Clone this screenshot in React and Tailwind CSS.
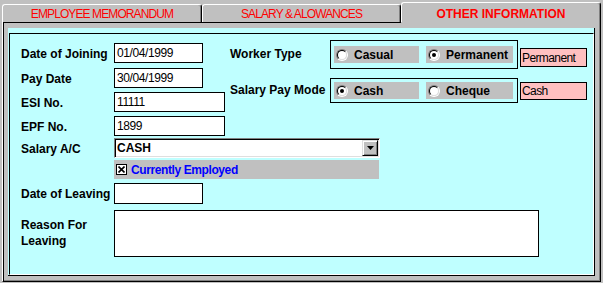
function Radio({ label, checked, width }) {
  return (
    <div className={`flex h-[17px] items-center bg-[#c0c0c0] pl-[2px] ${width}`}>
      <div className="flex h-[12px] w-[12px] items-center justify-center rounded-full border border-t-[#808080] border-l-[#808080] border-b-white border-r-white">
        <div className="flex h-[10px] w-[10px] items-center justify-center rounded-full border border-t-black border-l-black border-b-[#dfdfdf] border-r-[#dfdfdf] bg-white">
          {checked && <div className="h-[4px] w-[4px] rounded-full bg-black" />}
        </div>
      </div>
      <span className="ml-[6px] text-[12px] font-bold leading-none text-black">{label}</span>
    </div>
  );
}

function Field({ label, value, width, className = '' }) {
  return (
    <div className={`flex h-[20px] items-center ${className}`}>
      <span className="w-[93px] whitespace-nowrap pt-px text-[12px] font-bold">{label}</span>
      <div className={`flex h-[20px] items-center border border-black bg-white pl-[2px] text-[12px] tracking-[-0.4px] ${width}`}>
        {value}
      </div>
    </div>
  );
}

function Tab({ label, active, width }) {
  if (active) {
    return (
      <div
        className={`flex h-[20px] items-center justify-center rounded-t-[3px] border-t border-l border-r border-t-white border-l-white border-r-black pt-[3px] text-[12px] font-bold text-[#ff0000] shadow-[inset_-1px_0_0_#808080] ${width}`}
      >
        {label}
      </div>
    );
  }
  return (
    <div
      className={`flex h-[18px] items-center justify-center rounded-t-[3px] border-t border-l border-r border-t-white border-l-white border-r-black pt-px text-[12px] tracking-[-0.9px] text-[#ff0000] shadow-[inset_-1px_0_0_#808080] ${width}`}
    >
      {label}
    </div>
  );
}

export default function App() {
  return (
    <div className="flex h-[283px] w-[603px] flex-col overflow-hidden bg-[#c0c0c0] font-['Liberation_Sans',Arial,sans-serif] text-black">
      <div className="flex h-[22px] items-end pl-[2px]">
        <Tab label="EMPLOYEE MEMORANDUM" width="w-[200px]" />
        <Tab label="SALARY & ALOWANCES" width="w-[199px]" />
        <Tab label="OTHER INFORMATION" width="w-[200px]" active />
      </div>

      <div className="ml-[2px] flex h-[260px] w-[599px] border-l border-r border-b border-l-white border-r-black border-b-black shadow-[inset_-1px_-1px_0_#808080]">
        <div className="flex flex-1 flex-col border-l border-l-black">
          <div className="h-px w-[397px] bg-black" />
          <div className="pl-[4px] pt-[5px]">
            <div className="h-[248px] w-[587px] border-r border-b border-black bg-[#bfffff] pl-px pt-[5px]">
              <div className="h-full border border-t-black border-l-black border-r-white border-b-white pl-[11px]">
                <div className="flex">
                  <div className="w-[204px] pt-[9px]">
                    <Field label="Date of Joining" value="01/04/1999" width="w-[89px]" />
                    <Field label="Pay Date" value="30/04/1999" width="w-[89px]" className="mt-[5px]" />
                    <Field label="ESI No." value="11111" width="w-[111px]" className="mt-[4px]" />
                    <Field label="EPF No." value="1899" width="w-[111px]" className="mt-[4px]" />
                  </div>

                  <div className="ml-[5px] pt-[6px]">
                    <div className="flex items-start">
                      <span className="flex h-[29px] w-[100px] items-center pb-[2px] text-[12px] font-bold">Worker Type</span>
                      <div className="flex h-[29px] w-[188px] items-center gap-[7px] border border-black pl-[3px]">
                        <Radio label="Casual" width="w-[85px]" />
                        <Radio label="Permanent" width="w-[87px]" checked />
                      </div>
                      <div className="ml-[2px] mt-[8px] flex h-[19px] w-[67px] items-center border border-black bg-[#ffc0c0] pl-px text-[12px] tracking-[-0.6px]">
                        Permanent
                      </div>
                    </div>
                    <div className="mt-[9px] flex items-start">
                      <span className="flex h-[25px] w-[100px] items-center whitespace-nowrap pb-[1px] text-[12px] font-bold">
                        Salary Pay Mode
                      </span>
                      <div className="flex h-[25px] w-[188px] items-center gap-[7px] border border-black pl-[3px]">
                        <Radio label="Cash" width="w-[85px]" checked />
                        <Radio label="Cheque" width="w-[87px]" />
                      </div>
                      <div className="ml-[2px] mt-[4px] flex h-[18px] w-[67px] items-center border border-black bg-[#ffc0c0] pl-px text-[12px] tracking-[-0.6px]">
                        Cash
                      </div>
                    </div>
                  </div>
                </div>

                <div className="mt-[2px] flex h-[20px] items-center">
                  <span className="w-[93px] pt-px text-[12px] font-bold">Salary A/C</span>
                  <div className="flex h-[20px] w-[266px] items-center border border-t-[#808080] border-l-[#808080] border-r-white border-b-white bg-white shadow-[inset_1px_1px_0_#000,inset_-1px_-1px_0_#dfdfdf]">
                    <span className="flex-1 pl-[2px] text-[12px] font-bold">CASH</span>
                    <div className="mr-px flex h-[16px] w-[16px] items-center justify-center border border-t-[#dfdfdf] border-l-[#dfdfdf] border-r-black border-b-black bg-[#c0c0c0] shadow-[inset_1px_1px_0_#fff,inset_-1px_-1px_0_#808080]">
                      <svg width="7" height="4" viewBox="0 0 7 4">
                        <path d="M0 0h7L3.5 4z" fill="#000" />
                      </svg>
                    </div>
                  </div>
                </div>

                <div className="ml-[93px] mt-[2px] flex h-[19px] w-[265px] items-center bg-[#c0c0c0] pl-[2px]">
                  <div className="flex h-[11px] w-[11px] items-center justify-center border border-black bg-white">
                    <svg width="7" height="7" viewBox="0 0 7 7">
                      <path d="M0.5 0.5L6.5 6.5M6.5 0.5L0.5 6.5" stroke="#000" strokeWidth="1.6" />
                    </svg>
                  </div>
                  <span className="ml-[4px] text-[12px] font-bold tracking-[-0.4px] text-[#0000ff]">Currently Employed</span>
                </div>

                <div className="mt-[4px] flex h-[21px] items-center">
                  <span className="w-[93px] whitespace-nowrap pt-px text-[12px] font-bold">Date of Leaving</span>
                  <div className="h-[21px] w-[89px] border border-black bg-white" />
                </div>

                <div className="mt-[6px] flex items-start">
                  <span className="w-[93px] pt-[7px] text-[12px] font-bold leading-[16px]">
                    Reason For
                    <br />
                    Leaving
                  </span>
                  <div className="h-[47px] w-[425px] border border-black bg-white" />
                </div>
              </div>
            </div>
          </div>
        </div>
      </div>
    </div>
  );
}
